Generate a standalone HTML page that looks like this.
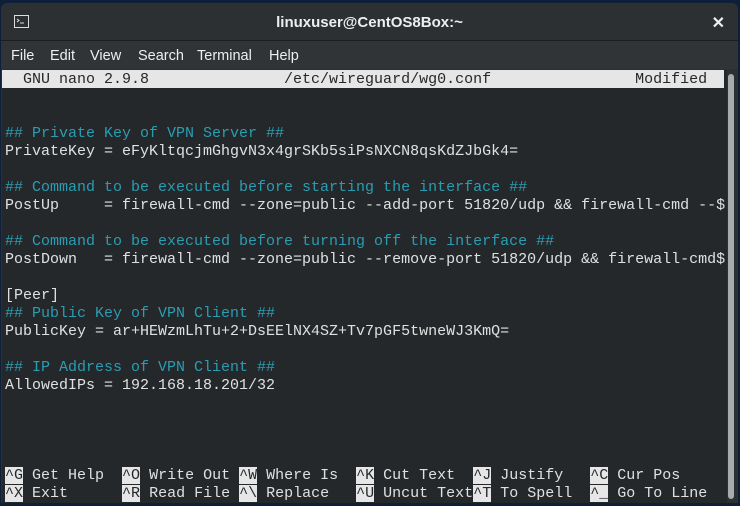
<!DOCTYPE html><html><head><style>
body{margin:0;width:740px;height:506px;background:#0e1f3a;overflow:hidden;position:relative;font-family:"Liberation Sans",sans-serif}
.win{position:absolute;left:1px;top:3px;width:737px;height:500px;background:#2c3032;border-radius:6px 6px 0 0;overflow:hidden}
.title{position:absolute;left:0;top:0;width:100%;height:37px;border-bottom:1px solid #1b1d1e;color:#eee;font-weight:bold;font-size:15px;text-align:center;line-height:39px}
.menu{position:absolute;top:38px;left:0;width:100%;height:28px;background:#303437;color:#eee;font-size:14.5px;line-height:30px}
.menu span{position:absolute}
.term{position:absolute;left:1px;top:67px;width:725px;height:433px;background:#24282a}
pre{margin:0;position:absolute;left:3px;top:1px;font-family:"Liberation Mono",monospace;font-size:15px;line-height:18px;color:#e0e0e0;letter-spacing:0}
.c{color:#2a9db2}.i{background:#e6e6e6;color:#24282a}
.hdr{position:absolute;left:0;top:0;width:722px;height:18px;background:#e6e6e6}
.sb{position:absolute;left:727px;top:71px;width:6px;height:425px;background:#a8aaab;border-radius:3px}
</style></head><body><div class="win">
<div class="title">linuxuser@CentOS8Box:~</div>
<svg style="position:absolute;left:13px;top:12px" width="15" height="13"><rect x="0.5" y="0.5" width="14" height="12" fill="none" stroke="#ddd"/><path d="M3 4l2 1.5L3 7M6 8h4" stroke="#ddd" fill="none"/></svg>
<div style="position:absolute;right:13px;top:10px;color:#eee;font-size:16px;font-weight:bold">✕</div>
<div class="menu"><span style="left:10px">File</span><span style="left:49px">Edit</span><span style="left:89px">View</span><span style="left:137px">Search</span><span style="left:196px">Terminal</span><span style="left:268px">Help</span></div>
<div class="term"><div class="hdr"></div>
<pre><span style="color:#24282a">  GNU nano 2.9.8               /etc/wireguard/wg0.conf                Modified</span>


<span class="c">## Private Key of VPN Server ##</span>
PrivateKey = eFyKltqcjmGhgvN3x4grSKb5siPsNXCN8qsKdZJbGk4=

<span class="c">## Command to be executed before starting the interface ##</span>
PostUp     = firewall-cmd --zone=public --add-port 51820/udp &amp;&amp; firewall-cmd --$

<span class="c">## Command to be executed before turning off the interface ##</span>
PostDown   = firewall-cmd --zone=public --remove-port 51820/udp &amp;&amp; firewall-cmd$

[Peer]
<span class="c">## Public Key of VPN Client ##</span>
PublicKey = ar+HEWzmLhTu+2+DsEElNX4SZ+Tv7pGF5twneWJ3KmQ=

<span class="c">## IP Address of VPN Client ##</span>
AllowedIPs = 192.168.18.201/32




<span class="i">^G</span> Get Help  <span class="i">^O</span> Write Out <span class="i">^W</span> Where Is  <span class="i">^K</span> Cut Text  <span class="i">^J</span> Justify   <span class="i">^C</span> Cur Pos
<span class="i">^X</span> Exit      <span class="i">^R</span> Read File <span class="i">^\</span> Replace   <span class="i">^U</span> Uncut Text<span class="i">^T</span> To Spell  <span class="i">^_</span> Go To Line</pre>
</div>
<div class="sb"></div>
</div></body></html>
